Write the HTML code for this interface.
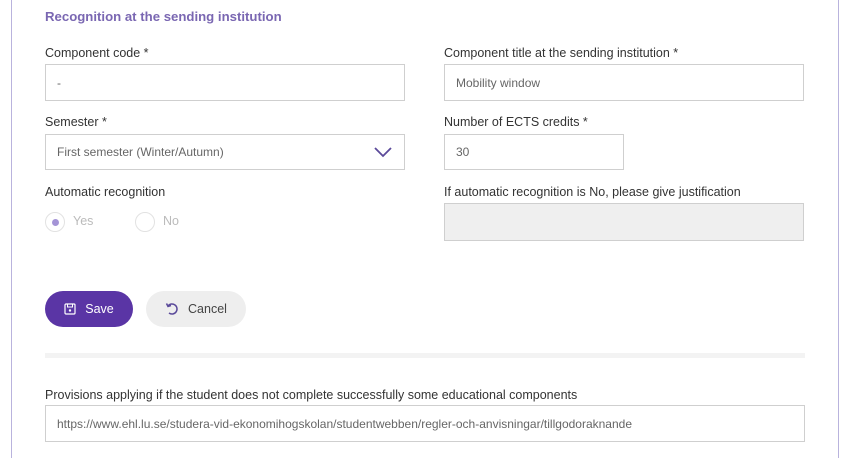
<!DOCTYPE html>
<html><head><style>
body{margin:0;width:848px;height:458px;background:#fff;font-family:"Liberation Sans",sans-serif;position:relative;overflow:hidden}
.b{position:absolute;top:0;bottom:0;width:1px;background:#b9b3dd}
.t{position:absolute;font-size:12.5px;color:#333;white-space:nowrap}
.in{position:absolute;box-sizing:border-box;border:1px solid #cfcfcf;background:#fff;font-size:12px;color:#666;padding-left:11px;display:flex;align-items:center;white-space:nowrap}
.h{position:absolute;left:45px;top:9px;font-size:13.2px;font-weight:bold;color:#7a67b2}
.r{position:absolute;width:20px;height:20px;border:1px solid #e2e2e2;border-radius:50%;box-sizing:border-box}
.btn{position:absolute;border-radius:18px;display:flex;align-items:center;justify-content:center;font-size:12.5px}
</style></head><body>
<div class="b" style="left:11px"></div><div class="b" style="left:838px"></div>
<div class="h">Recognition at the sending institution</div>
<div class="t" style="left:45px;top:46px">Component code *</div>
<div class="in" style="left:45px;top:64px;width:360px;height:37px">-</div>
<div class="t" style="left:444px;top:46px">Component title at the sending institution *</div>
<div class="in" style="left:444px;top:64px;width:360px;height:37px">Mobility window</div>
<div class="t" style="left:45px;top:115px">Semester *</div>
<div class="in" style="left:45px;top:134px;width:360px;height:36px">First semester (Winter/Autumn)
<svg style="position:absolute;right:12px;top:11px" width="18" height="12" viewBox="0 0 18 12"><path d="M1 2 L9 10 L17 2" fill="none" stroke="#5b4a9a" stroke-width="1.8"/></svg></div>
<div class="t" style="left:444px;top:115px">Number of ECTS credits *</div>
<div class="in" style="left:444px;top:134px;width:180px;height:36px">30</div>
<div class="t" style="left:45px;top:185px">Automatic recognition</div>
<div class="r" style="left:45px;top:212px"><div style="position:absolute;left:6px;top:6px;width:7px;height:7px;border-radius:50%;background:#a494d6"></div></div>
<div class="t" style="left:73px;top:214px;color:#bbb">Yes</div>
<div class="r" style="left:135px;top:212px"></div>
<div class="t" style="left:163px;top:214px;color:#bbb">No</div>
<div class="t" style="left:444px;top:185px">If automatic recognition is No, please give justification</div>
<div class="in" style="left:444px;top:203px;width:360px;height:38px;background:#efefef"></div>
<div class="btn" style="left:45px;top:291px;width:88px;height:36px;background:#5a35a5;color:#fff">
<svg width="12" height="12" viewBox="0 0 12 12" style="margin-right:9px"><rect x="1" y="1" width="10" height="10" rx="1" fill="none" stroke="#fff" stroke-width="1.2"/><rect x="3.5" y="1" width="5" height="3" fill="none" stroke="#fff" stroke-width="1"/><circle cx="6" cy="7.5" r="1.2" fill="#fff"/></svg>Save</div>
<div class="btn" style="left:146px;top:291px;width:100px;height:36px;background:#eeeeee;color:#444">
<svg width="14" height="14" viewBox="0 0 14 14" style="margin-right:9px"><path d="M3 4 A5 5 0 1 1 4 11" fill="none" stroke="#5b4a9a" stroke-width="1.5"/><path d="M1.5 1.5 L3 4.5 L6 3.5" fill="none" stroke="#5b4a9a" stroke-width="1.5"/></svg>Cancel</div>
<div style="position:absolute;left:45px;top:353px;width:760px;height:5px;background:#f3f3f3"></div>
<div class="t" style="left:45px;top:388px">Provisions applying if the student does not complete successfully some educational components</div>
<div class="in" style="left:45px;top:405px;width:760px;height:37px">https://www.ehl.lu.se/studera-vid-ekonomihogskolan/studentwebben/regler-och-anvisningar/tillgodoraknande</div>
</body></html>
